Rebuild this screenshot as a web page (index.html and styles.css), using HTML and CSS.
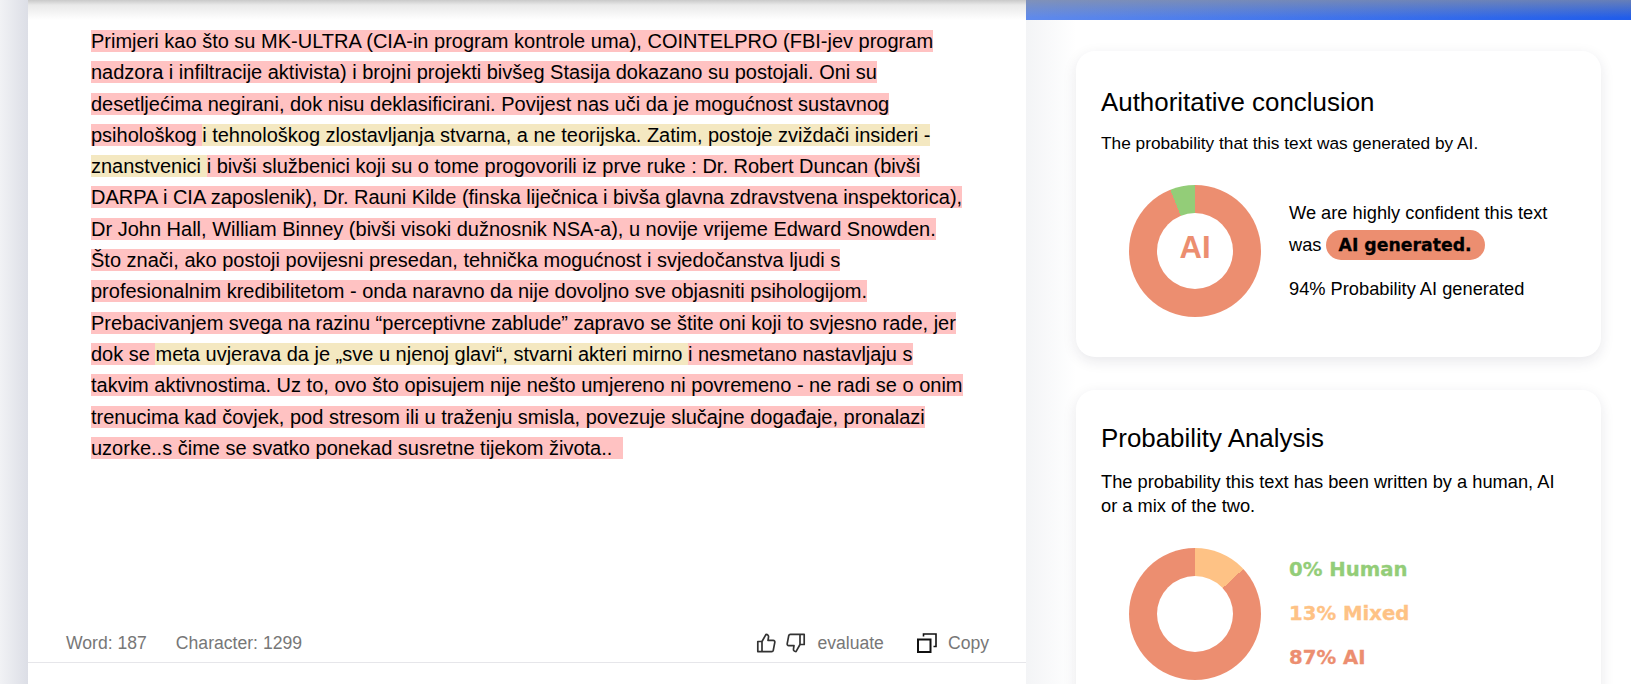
FILE: index.html
```html
<!DOCTYPE html>
<html lang="en">
<head>
    <meta charset="UTF-8">
    <meta name="viewport" content="width=device-width, initial-scale=1.0">
    <title>AI detector result</title>
    <link rel="stylesheet" href="styles.css">
</head>
<body>

<div class="left-strip"></div>

<main class="editor">
    <div class="editor-shade"></div>
    <div class="editor-text">
        <p>
            <span class="hl-ai">Primjeri kao što su MK-ULTRA (CIA-in program kontrole uma), COINTELPRO (FBI-jev program nadzora i infiltracije aktivista) i brojni projekti bivšeg Stasija dokazano su postojali. Oni su desetljećima negirani, dok nisu deklasificirani. Povijest nas uči da je mogućnost sustavnog psihološkog </span><span class="hl-mixed">i tehnološkog zlostavljanja stvarna, a ne teorijska. Zatim, postoje zviždači insideri - znanstvenici </span><span class="hl-ai">i bivši službenici koji su o tome progovorili iz prve ruke : Dr. Robert Duncan (bivši DARPA i CIA zaposlenik), Dr. Rauni Kilde (finska liječnica i bivša glavna zdravstvena inspektorica), Dr John Hall, William Binney (bivši visoki dužnosnik NSA-a), u novije vrijeme Edward Snowden. Što znači, ako postoji povijesni presedan, tehnička mogućnost i svjedočanstva ljudi s profesionalnim kredibilitetom - onda naravno da nije dovoljno sve objasniti psihologijom. Prebacivanjem svega na razinu “perceptivne zablude” zapravo se štite oni koji to svjesno rade, jer dok se </span><span class="hl-mixed">meta uvjerava da je „sve u njenoj glavi“, stvarni akteri mirno </span><span class="hl-ai">i nesmetano nastavljaju s takvim aktivnostima. Uz to, ovo što opisujem nije nešto umjereno ni povremeno - ne radi se o onim trenucima kad čovjek, pod stresom ili u traženju smisla, povezuje slučajne događaje, pronalazi uzorke..s čime se svatko ponekad susretne tijekom života..&nbsp;&nbsp;</span>
        </p>
    </div>
    <div class="editor-footer">
        <div class="counts">
            <span>Word: 187</span>
            <span>Character: 1299</span>
        </div>
        <div class="actions">
            <svg class="icon icon-up" viewBox="0 0 20 20" fill="none" stroke="#333" stroke-width="1.7" stroke-linejoin="round">
                <path d="M6 8.5H1.8V18.6H6M6 8.5 10 1.4C11.8 1.4 12.8 2.6 12.5 4.2L12 7.3H17.2C18.4 7.3 19 8.3 18.8 9.3L17.3 17.2C17.1 18.1 16.5 18.6 15.6 18.6H6V8.5Z"/>
            </svg>
            <svg class="icon icon-down" viewBox="0 0 20 20" fill="none" stroke="#333" stroke-width="1.7" stroke-linejoin="round">
                <path d="M14 11.5H18.2V1.4H14M14 11.5 10 18.6C8.2 18.6 7.2 17.4 7.5 15.8L8 12.7H2.8C1.6 12.7 1 11.7 1.2 10.7L2.7 2.8C2.9 1.9 3.5 1.4 4.4 1.4H14V11.5Z"/>
            </svg>
            <span class="action-label">evaluate</span>
            <svg class="icon icon-copy" viewBox="0 0 20 20" fill="none" stroke="#111">
                <rect x="1" y="6.5" width="12.5" height="12.5" stroke-width="2"/>
                <path d="M6.5 3.5V1H19V13.5H16.5" stroke-width="1.6"/>
            </svg>
            <span class="action-label">Copy</span>
        </div>
    </div>
</main>

<aside class="side">
    <div class="top-bar"></div>
    <div class="side-body">
        <section class="card card-conclusion">
            <h2>Authoritative conclusion</h2>
            <p class="card-sub">The probability that this text was generated by AI.</p>
            <div class="result">
                <div class="donut donut-conclusion"><div class="donut-hole">AI</div></div>
                <div class="result-text">
                    <p>We are highly confident this text</p>
                    <p class="result-was">was <span class="pill">AI generated.</span></p>
                    <p>94% Probability AI generated</p>
                </div>
            </div>
        </section>
        <section class="card card-analysis">
            <h2>Probability Analysis</h2>
            <p class="card-sub">The probability this text has been written by a human, AI or a mix of the two.</p>
            <div class="result">
                <div class="donut donut-analysis"><div class="donut-hole"></div></div>
                <div class="legend">
                    <div class="legend-human">0% Human</div>
                    <div class="legend-mixed">13% Mixed</div>
                    <div class="legend-ai">87% AI</div>
                </div>
            </div>
        </section>
    </div>
</aside>

</body>
</html>
```

FILE: styles.css
```css
html, body {
    height: 100%;
}
body {
    margin: 0;
    height: 684px;
    overflow: hidden;
    display: flex;
    font-family: "Liberation Sans", Arial, sans-serif;
    color: #000;
    background: #fff;
}
p, h2 {
    margin: 0;
}

.left-strip {
    width: 28px;
    flex-shrink: 0;
    background: linear-gradient(to right, #f1f2f5, #dcdee6);
}

.editor {
    width: 998px;
    flex-shrink: 0;
    display: flex;
    flex-direction: column;
    background: #fff;
}
.editor-shade {
    height: 20px;
    flex-shrink: 0;
    background: linear-gradient(to bottom, #c9c9c9, #e9e9e9 25%, #fff);
}
.editor-text {
    flex: 1;
    padding: 6px 60px 0 63px;
    font-size: 20px;
    line-height: 31.3px;
}
.hl-ai {
    background: #ffc2c2;
}
.hl-mixed {
    background: #f4e8c1;
}
.editor-footer {
    height: 42px;
    margin-bottom: 21px;
    padding: 3px 37px 0 38px;
    box-sizing: border-box;
    border-bottom: 1px solid #e6e6ea;
    display: flex;
    justify-content: space-between;
    align-items: center;
    color: #777;
    font-size: 17.6px;
}
.counts {
    display: flex;
    gap: 29px;
}
.actions {
    display: flex;
    align-items: center;
}
.icon {
    width: 20px;
    height: 20px;
}
.icon-down {
    margin-left: 10px;
}
.action-label {
    margin-left: 11px;
}
.icon-copy {
    margin-left: 33px;
}

.side {
    flex: 1;
    min-width: 0;
    height: 684px;
    overflow: hidden;
    display: flex;
    flex-direction: column;
}
.top-bar {
    height: 20px;
    flex-shrink: 0;
    background:
        linear-gradient(to bottom, rgba(150, 150, 150, 0.6), rgba(150, 150, 150, 0) 90%),
        linear-gradient(to right, #5f8aec, #1f5ceb);
}
.side-body {
    flex: 1;
    padding: 31px 30px 0 50px;
    background: linear-gradient(to right, #f3f4f6, #fff 50px);
}
.card {
    background: #fff;
    border-radius: 19px;
    padding: 36px 30px 0 25px;
    box-shadow: 0 4px 14px rgba(30, 30, 60, 0.1);
}
.card-conclusion {
    height: 306px;
    box-sizing: border-box;
    margin-bottom: 33px;
}
.card-analysis {
    padding-top: 33px;
    padding-bottom: 40px;
}
.card h2 {
    font-size: 25.9px;
    line-height: 30px;
    font-weight: 400;
}
.card-sub {
    margin-top: 14px;
    font-size: 17.28px;
    line-height: 24px;
}
.card-analysis .card-sub {
    margin-top: 17px;
    font-size: 18.25px;
}
.result {
    display: flex;
    align-items: center;
    margin-top: 30px;
    padding-left: 28px;
    gap: 28px;
}
.donut {
    width: 132px;
    height: 132px;
    flex-shrink: 0;
    border-radius: 50%;
    display: flex;
    align-items: center;
    justify-content: center;
}
.donut-conclusion {
    background: conic-gradient(#ec8e70 0 338deg, #93cd78 338deg 360deg);
}
.donut-analysis {
    background: conic-gradient(#fec285 0 47deg, #ec8e70 47deg 360deg);
}
.donut-hole {
    width: 76px;
    height: 70px;
    padding-bottom: 6px;
    border-radius: 50%;
    background: #fff;
    color: #ec8e70;
    font-size: 31px;
    font-weight: 700;
    display: flex;
    align-items: center;
    justify-content: center;
}
.result-text {
    font-size: 18.25px;
    line-height: 32px;
}
.result-was {
    margin-bottom: 12px;
}
.pill {
    display: inline-block;
    line-height: 30px;
    padding: 0 13px;
    margin-left: -1px;
    border-radius: 15px;
    background: #ec8e70;
    font-family: "DejaVu Sans", sans-serif;
    font-size: 17.3px;
    font-weight: 700;
    -webkit-text-stroke: 0.3px currentColor;
}
.legend {
    font-family: "DejaVu Sans", sans-serif;
    font-size: 19.7px;
    font-weight: 700;
    line-height: 44px;
    -webkit-text-stroke: 0.3px currentColor;
}
.legend-human {
    color: #93cd78;
}
.legend-mixed {
    color: #fec285;
}
.legend-ai {
    color: #ec8e70;
}
```
